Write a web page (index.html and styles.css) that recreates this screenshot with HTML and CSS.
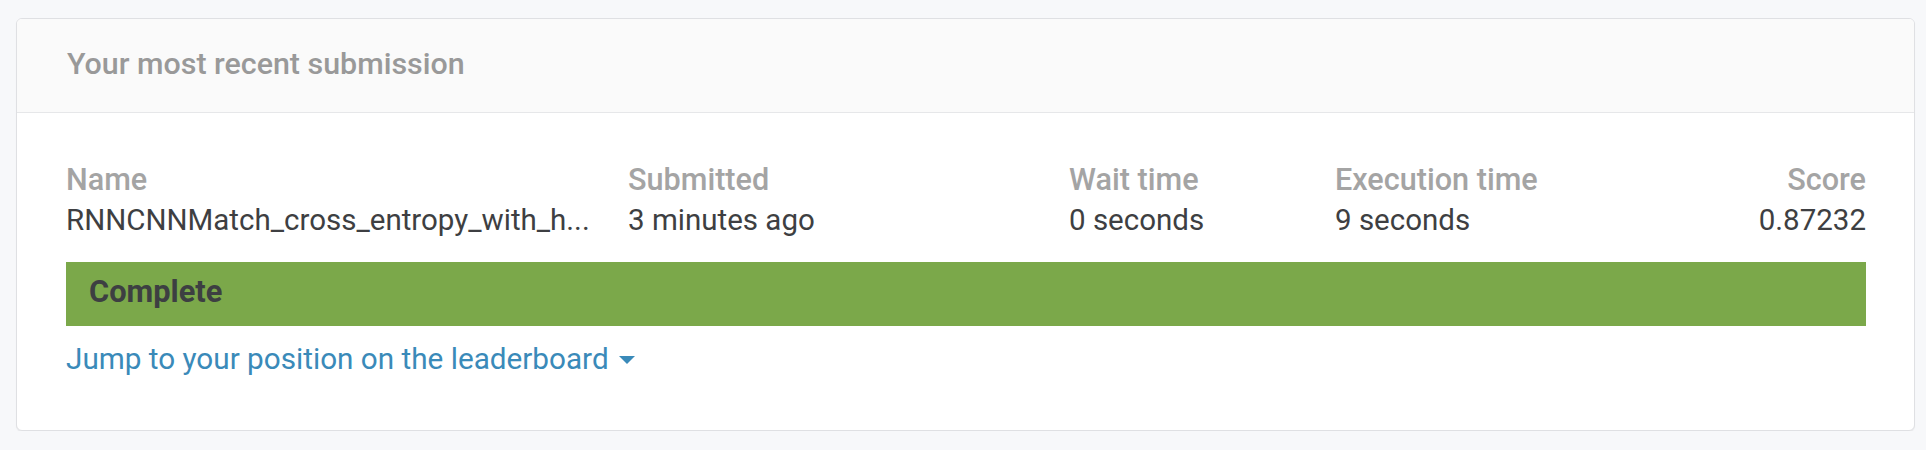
FILE: index.html
```html
<!DOCTYPE html>
<html lang="en">
<head>
<meta charset="utf-8">
<title>Your most recent submission</title>
<link rel="stylesheet" href="styles.css">
</head>
<body>
<section class="card">
  <header class="card-header">Your most recent submission</header>
  <div class="card-body">
    <div class="stats">
      <div class="stat">
        <div class="label">Name</div>
        <div class="value">RNNCNNMatch_cross_entropy_with_h...</div>
      </div>
      <div class="stat">
        <div class="label">Submitted</div>
        <div class="value">3 minutes ago</div>
      </div>
      <div class="stat">
        <div class="label">Wait time</div>
        <div class="value">0 seconds</div>
      </div>
      <div class="stat">
        <div class="label">Execution time</div>
        <div class="value">9 seconds</div>
      </div>
      <div class="stat stat-right">
        <div class="label">Score</div>
        <div class="value">0.87232</div>
      </div>
    </div>
    <div class="status">Complete</div>
    <a class="jump" href="#">Jump to your position on the leaderboard<span class="caret"></span></a>
  </div>
</section>
</body>
</html>
```

FILE: styles.css
```css
html, body {
  margin: 0;
  padding: 0;
}

body {
  background: #f7f8fa;
  font-family: Roboto, "Liberation Sans", Arial, sans-serif;
  padding: 18px 11px 0 16px;
}

.card {
  background: #ffffff;
  border: 1px solid #dfe0e3;
  border-radius: 6px;
  box-shadow: 0 1px 1px rgba(0, 0, 0, 0.06);
  overflow: hidden;
}

.card-header {
  background: #fafafa;
  border-bottom: 1px solid #e6e7e9;
  color: #999999;
  font-size: 30.4px;
  font-weight: 500;
  line-height: 36px;
  padding: 27px 49px 30px 50px;
}

.card-body {
  padding: 47px 48px 51px 49px;
}

.stats {
  display: grid;
  grid-template-columns: 562px 441px 266px 1fr auto;
}

.stat-right {
  text-align: right;
}

.label {
  color: #a4a4a4;
  font-size: 30.6px;
  font-weight: 500;
  line-height: 40px;
}

.value {
  color: #3e3f42;
  font-size: 29.5px;
  line-height: 40px;
  white-space: nowrap;
}

.status {
  margin-top: 22px;
  height: 64px;
  box-sizing: border-box;
  background: #7ba84a;
  color: #3d3f42;
  font-size: 30.8px;
  font-weight: 700;
  line-height: 60px;
  padding: 0 0 4px 23px;
}

.jump {
  display: inline-block;
  margin-top: 13px;
  color: #3a8ab9;
  font-size: 29.7px;
  line-height: 40px;
  text-decoration: none;
}

.caret {
  display: inline-block;
  width: 0;
  height: 0;
  margin-left: 10px;
  border-left: 8px solid transparent;
  border-right: 8px solid transparent;
  border-top: 8px solid #3a8ab9;
  vertical-align: 5px;
}
```
